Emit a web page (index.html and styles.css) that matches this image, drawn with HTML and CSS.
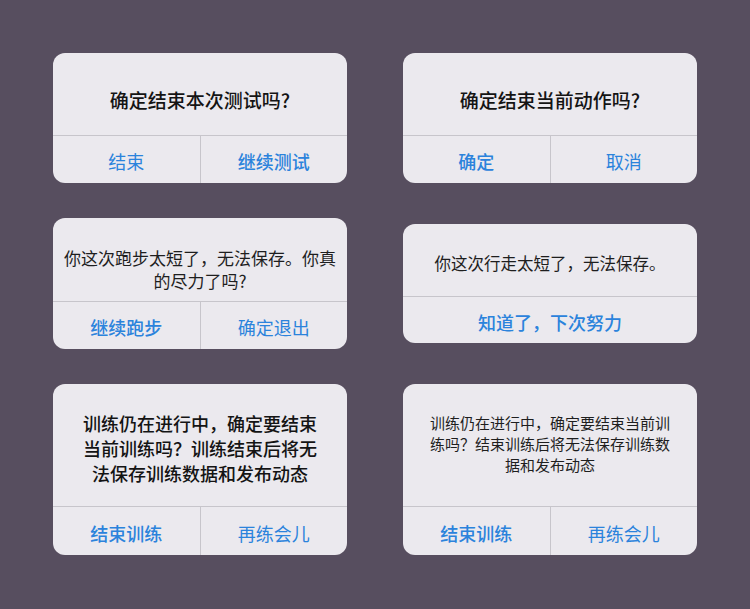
FILE: index.html
```html
<!DOCTYPE html>
<html lang="zh-CN">
<head>
    <meta charset="UTF-8">
    <meta name="viewport" content="width=device-width, initial-scale=1.0">
    <link rel="stylesheet" href="styles.css">
    <title>弹窗样式</title>
</head>
<body>
    <div class="board">
        <!-- 第一行：标题弹窗 -->
        <div class="alert">
            <div class="alert-body title">确定结束本次测试吗?</div>
            <div class="alert-actions">
                <button class="action">结束</button>
                <button class="action strong">继续测试</button>
            </div>
        </div>
        <div class="alert">
            <div class="alert-body title">确定结束当前动作吗?</div>
            <div class="alert-actions">
                <button class="action strong">确定</button>
                <button class="action">取消</button>
            </div>
        </div>

        <!-- 第二行：普通文字 -->
        <div class="alert">
            <div class="alert-body text run">你这次跑步太短了，无法保存。你真<br>的尽力了吗?</div>
            <div class="alert-actions">
                <button class="action strong">继续跑步</button>
                <button class="action">确定退出</button>
            </div>
        </div>
        <div class="alert">
            <div class="alert-body text walk">你这次行走太短了，无法保存。</div>
            <div class="alert-actions single">
                <button class="action strong">知道了，下次努力</button>
            </div>
        </div>

        <!-- 第三行：长文字 -->
        <div class="alert">
            <div class="alert-body long">训练仍在进行中，确定要结束<br>当前训练吗？训练结束后将无<br>法保存训练数据和发布动态</div>
            <div class="alert-actions tall">
                <button class="action strong">结束训练</button>
                <button class="action">再练会儿</button>
            </div>
        </div>
        <div class="alert">
            <div class="alert-body small">训练仍在进行中，确定要结束当前训<br>练吗？结束训练后将无法保存训练数<br>据和发布动态</div>
            <div class="alert-actions tall">
                <button class="action strong">结束训练</button>
                <button class="action">再练会儿</button>
            </div>
        </div>
    </div>
</body>
</html>
```

FILE: styles.css
```css
body{
    margin: 0;
    background: #574e5f;
    font-family: "Noto Sans CJK SC", "Noto Sans", sans-serif;
}
.board{
    display: grid;
    grid-template-columns: 294px 294px;
    column-gap: 56px;
    row-gap: 35px;
    padding: 53px;
    align-items: center;
}
.alert{
    background: #ebe9ee;
    border-radius: 12px;
    overflow: hidden;
}
.alert-body{
    text-align: center;
    color: #141414;
}
.alert-body.title{
    font-size: 19px;
    font-weight: 500;
    line-height: 24px;
    padding: 35px 10px 23px;
}
.alert-body.text{
    font-size: 17px;
    line-height: 23px;
    color: #1e1e1e;
}
.alert-body.run{
    padding: 28px 10px 9px;
}
.alert-body.walk{
    font-size: 16.5px;
    padding: 28px 10px 21px;
}
.alert-body.long{
    font-size: 18px;
    font-weight: 500;
    line-height: 25px;
    padding: 27px 10px 20px;
}
.alert-body.small{
    font-size: 15px;
    line-height: 21px;
    color: #1e1e1e;
    padding: 28px 10px 31px;
}
.alert-actions{
    display: flex;
    border-top: 1px solid #c7c5cb;
}
.action{
    flex: 1;
    height: 47px;
    padding: 3px 0 0;
    border: none;
    background: none;
    font-family: inherit;
    font-size: 18px;
    color: #2b83dc;
}
.action + .action{
    border-left: 1px solid #c7c5cb;
}
.alert-actions.single .action{
    height: 46px;
}
.alert-actions.tall .action{
    height: 48px;
}
.action.strong{
    font-weight: 500;
}
```
